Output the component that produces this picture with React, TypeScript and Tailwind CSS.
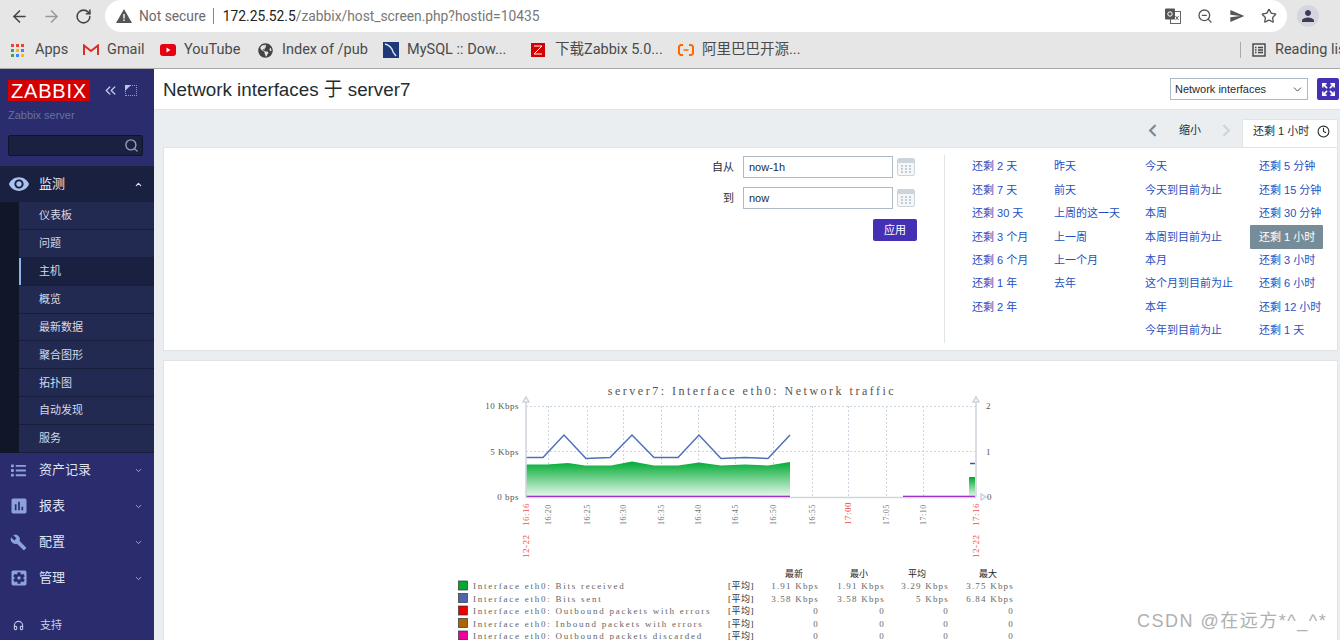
import { ArrowLeft, ArrowRight, RotateCw, ZoomOut, Star, ChevronLeft, ChevronRight, ChevronDown, ChevronUp, ChevronsLeft, Clock, Search, Expand, Headphones } from 'lucide-react'
import { MdVisibility, MdAssessment, MdBuild, MdSettingsApplications, MdPerson, MdSend } from 'react-icons/md'
import { FaList, FaGlobeAmericas } from 'react-icons/fa'

const UI_FONT = "font-['Liberation_Sans','Noto_Sans_CJK_SC',sans-serif]"

function AppsIcon() {
  const colors = ['#ea4335', '#ea4335', '#ea4335', '#34a853', '#fbbc05', '#4285f4', '#34a853', '#4285f4', '#fbbc05']
  return (
    <div className="grid h-[13px] w-[13px] grid-cols-3 gap-[2px]">
      {colors.map((c, i) => (
        <div key={i} className="h-[3px] w-[3px]" style={{ background: c }} />
      ))}
    </div>
  )
}

function GmailIcon() {
  return (
    <svg width="16" height="12" viewBox="0 0 16 12">
      <path d="M1 11V1.500L8 7l7-5.500V11" fill="none" stroke="#d93025" strokeWidth="2" />
    </svg>
  )
}

function YoutubeIcon() {
  return (
    <svg width="16" height="12" viewBox="0 0 16 12">
      <rect width="16" height="12" rx="3" fill="#e60012" />
      <path d="M6.500 3.500v5l4-2.500z" fill="#fff" />
    </svg>
  )
}

function MysqlIcon() {
  return (
    <svg width="16" height="16" viewBox="0 0 16 16">
      <rect width="16" height="16" fill="#1f3a78" />
      <path d="M2 2c4 1 7 4 8 8l3 4" fill="none" stroke="#dfe7f5" strokeWidth="1.300" />
    </svg>
  )
}

function ZabbixMark() {
  return (
    <svg width="14" height="14" viewBox="0 0 14 14">
      <rect width="14" height="14" fill="#d40000" />
      <path d="M3 3h8L3 11h8" fill="none" stroke="#fff" strokeWidth="1" />
    </svg>
  )
}

function AliIcon() {
  return (
    <svg width="16" height="12" viewBox="0 0 16 12">
      <path d="M5 1H2.500L1 2.500v7L2.500 11H5M11 1h2.500L15 2.500v7L13.500 11H11" fill="none" stroke="#ff6a00" strokeWidth="2" />
      <path d="M5.500 6h5" stroke="#ff6a00" strokeWidth="1.500" />
    </svg>
  )
}

function TranslateIcon() {
  return (
    <svg width="16" height="16" viewBox="0 0 16 16">
      <rect x="5.500" y="3.500" width="10" height="12" fill="#fff" stroke="#666" />
      <rect x="0" y="0.500" width="10" height="11" rx="1" fill="#555" />
      <circle cx="5" cy="6" r="2.200" fill="none" stroke="#fff" strokeWidth="1" />
      <path d="M10.500 8l3 4M13.500 8l-3 4" stroke="#666" strokeWidth="1" />
    </svg>
  )
}

function Bookmark({ icon, label, className }: { icon: React.ReactNode; label: string; className: string }) {
  return (
    <div className={`flex shrink-0 items-center ${className}`}>
      <div className="flex w-[24px] shrink-0 items-center">{icon}</div>
      <span className="whitespace-nowrap">{label}</span>
    </div>
  )
}

function BrowserChrome() {
  return (
    <div className="h-[69px] shrink-0 border-b border-[#a9a9a9] bg-[#e6e6e6] font-['Roboto','Noto_Sans_CJK_SC',sans-serif] text-[#4a4a4a]">
      <div className="flex h-[32px] items-center">
        <div className="flex w-[105px] items-center pl-[10px] text-[#444]">
          <ArrowLeft size={19} strokeWidth={2} />
          <ArrowRight size={19} strokeWidth={2} className="ml-[13px] text-[#999]" />
          <RotateCw size={17} strokeWidth={2.200} className="ml-[14px]" />
        </div>
        <div className="flex h-[32px] w-[1182px] items-center rounded-l-full rounded-r-full bg-white pl-[11px] text-[13.800px]">
          <svg width="16" height="14" viewBox="0 0 16 14" className="shrink-0">
            <path d="M8 0l8 14H0z" fill="#555" />
            <path d="M7.300 5h1.400v4.500H7.300zM7.300 10.500h1.400v1.500H7.300z" fill="#fff" />
          </svg>
          <span className="ml-[7px] whitespace-nowrap text-[#6b6b6b]">Not secure</span>
          <div className="ml-[7px] h-[16px] w-px bg-[#888]" />
          <span className="ml-[9px] whitespace-nowrap text-[#222]">172.25.52.5</span>
          <span className="whitespace-nowrap text-[#777]">/zabbix/host_screen.php?hostid=10435</span>
          <div className="ml-auto flex items-center gap-[16px] pr-[10px] text-[#555]">
            <TranslateIcon />
            <ZoomOut size={16} />
            <MdSend size={16} />
            <Star size={16} strokeWidth={2} />
          </div>
        </div>
        <div className="ml-[10px] flex h-[22px] w-[22px] items-center justify-center rounded-full bg-[#d5d5de] text-[#3c3c5a]">
          <MdPerson size={18} />
        </div>
      </div>
      <div className="flex h-[36px] items-center overflow-hidden pl-[11px] text-[14.500px]">
        <Bookmark icon={<AppsIcon />} label="Apps" className="w-[72px]" />
        <Bookmark icon={<GmailIcon />} label="Gmail" className="w-[77px]" />
        <Bookmark icon={<YoutubeIcon />} label="YouTube" className="w-[98px]" />
        <Bookmark icon={<FaGlobeAmericas size={15} className="text-[#444]" />} label="Index of /pub" className="w-[125px]" />
        <Bookmark icon={<MysqlIcon />} label="MySQL :: Dow..." className="w-[148px]" />
        <Bookmark icon={<ZabbixMark />} label="下载Zabbix 5.0..." className="w-[147px]" />
        <Bookmark icon={<AliIcon />} label="阿里巴巴开源..." className="w-[562px]" />
        <div className="h-[16px] w-px shrink-0 bg-[#aaa]" />
        <div className="ml-[11px] flex shrink-0 items-center gap-[9px] whitespace-nowrap">
          <svg width="14" height="14" viewBox="0 0 14 14" fill="none" stroke="#444" strokeWidth="1.400">
            <rect x="1" y="1" width="12" height="12" />
            <path d="M3 4.500h1.500M6 4.500h5M3 7h1.500M6 7h5M3 9.500h1.500M6 9.500h5" />
          </svg>
          <span>Reading list</span>
        </div>
      </div>
    </div>
  )
}

const subItems = ['仪表板', '问题', '主机', '概览', '最新数据', '聚合图形', '拓扑图', '自动发现', '服务']

function MenuRow({ icon, label }: { icon: React.ReactNode; label: string }) {
  return (
    <div className="flex h-[36px] items-center">
      <div className="flex w-[39px] justify-center pr-[2px] text-[#8ba3d8]">{icon}</div>
      <span className="text-[13px] text-[#dfe4f2]">{label}</span>
      <ChevronDown size={9} strokeWidth={2.500} className="ml-auto mr-[11px] text-[#9fb0da]" />
    </div>
  )
}

function Sidebar() {
  return (
    <div className={`h-full w-[154px] shrink-0 overflow-hidden bg-[#2a2c6e] ${UI_FONT}`}>
      <div className="flex items-center pl-[8px] pt-[11px]">
        <div className="flex h-[21px] w-[82px] items-center justify-center bg-[#d40000] text-[20px] leading-none tracking-[0.800px] text-white">
          ZABBIX
        </div>
        <ChevronsLeft size={17} className="ml-[12px] text-[#b9c4e6]" />
        <div className="relative ml-[6px] h-[11px] w-[12px] border border-dotted border-[#8c9ccb]">
          <div className="absolute left-[-1px] top-[-1px] h-0 w-0 border-r-[6px] border-t-[6px] border-r-transparent border-t-[#b9c4e6]" />
        </div>
      </div>
      <div className="mt-[8px] pl-[8px] text-[11px] leading-[13px] text-[#66729f]">Zabbix server</div>
      <div className="ml-[8px] mt-[13px] flex h-[21px] w-[135px] items-center justify-end rounded-[2px] border border-[#0f1428] bg-[#1a2140] pr-[3px] text-[#93a1bf]">
        <Search size={15} strokeWidth={2.200} />
      </div>
      <div className="mt-[10px] flex h-[36px] items-center bg-[#1a2140]">
        <div className="flex w-[39px] justify-center pr-[2px] text-[#aac3ee]">
          <MdVisibility size={22} />
        </div>
        <span className="text-[13px] text-[#e6eaf4]">监测</span>
        <ChevronUp size={9} strokeWidth={3} className="ml-auto mr-[11px] text-[#dfe4f2]" />
      </div>
      <div className="flex bg-[#111728]">
        <div className="w-[19px] shrink-0" />
        <div className="flex-1">
          {subItems.map((item) => (
            <div
              key={item}
              className={`flex h-[27.900px] items-center border-b border-[#171d3a] pl-[20px] text-[11px] text-[#d5dae8] ${
                item === '主机' ? 'bg-[#1a2140] shadow-[inset_2px_0_0_#8ab4f0]' : 'bg-[#222a52]'
              }`}
            >
              {item}
            </div>
          ))}
        </div>
      </div>
      <div className="-mt-[1px]">
        <MenuRow icon={<FaList size={15} />} label="资产记录" />
        <MenuRow icon={<MdAssessment size={20} />} label="报表" />
        <MenuRow icon={<MdBuild size={17} />} label="配置" />
        <MenuRow icon={<MdSettingsApplications size={20} />} label="管理" />
      </div>
      <div className="mt-[11px] flex h-[36px] items-center">
        <div className="flex w-[39px] justify-center pr-[2px] text-[#b9c4e6]">
          <Headphones size={11} strokeWidth={2.500} />
        </div>
        <span className="pl-px text-[11px] text-[#c9d0e6]">支持</span>
      </div>
    </div>
  )
}

const presetColumns = [
  ['还剩 2 天', '还剩 7 天', '还剩 30 天', '还剩 3 个月', '还剩 6 个月', '还剩 1 年', '还剩 2 年'],
  ['昨天', '前天', '上周的这一天', '上一周', '上一个月', '去年'],
  ['今天', '今天到目前为止', '本周', '本周到目前为止', '本月', '这个月到目前为止', '本年', '今年到目前为止'],
  ['还剩 5 分钟', '还剩 15 分钟', '还剩 30 分钟', '还剩 1 小时', '还剩 3 小时', '还剩 6 小时', '还剩 12 小时', '还剩 1 天'],
]
const columnClasses = ['w-[82px] pl-[27px]', 'w-[92px] pl-[27px]', 'w-[104px] pl-[26px]', 'w-[114px] pl-[36px]']

function CalendarIcon() {
  return (
    <svg width="18" height="18" viewBox="0 0 18 18" className="ml-[4px] shrink-0">
      <rect x="0.500" y="0.500" width="17" height="17" rx="1.500" fill="#f4f6f8" stroke="#cdd5dc" />
      <rect x="1" y="1" width="16" height="4" fill="#cdd5dc" />
      <path d="M4 8h2M8 8h2M12 8h2M4 11h2M8 11h2M12 11h2M4 14h2M8 14h2M12 14h2" stroke="#b4bec8" strokeWidth="1.500" />
    </svg>
  )
}

function DateField({ label, value }: { label: string; value: string }) {
  return (
    <div className="flex items-center">
      <span className="mr-[9px] text-[11px] text-[#1f2c33]">{label}</span>
      <div className="flex h-[22px] w-[150px] items-center border border-[#acbbc6] bg-white pl-[5px] text-[11px] text-[#1f2c33]">{value}</div>
      <CalendarIcon />
    </div>
  )
}

function FilterPanel() {
  return (
    <div className="mr-[2px] flex h-[204px] border border-[#dfe4e7] bg-white">
      <div className="flex flex-1 flex-col items-end pr-[29px] pt-[8px]">
        <div className="flex flex-col items-end gap-[9px]">
          <DateField label="自从" value="now-1h" />
          <DateField label="到" value="now" />
        </div>
        <div className="-mr-[2px] mt-[10px] flex h-[22px] w-[44px] items-center justify-center rounded-[2px] bg-[#4330b5] text-[11px] text-white">应用</div>
      </div>
      <div className="my-[7px] w-px bg-[#dfe4e7]" />
      <div className="flex w-[392px] pt-[7px] text-[11px] text-[#1f4fc1]">
        {presetColumns.map((col, i) => (
          <div key={i} className={columnClasses[i] + ' shrink-0 whitespace-nowrap'}>
            {col.map((p) => (
              <div
                key={p}
                className={`flex h-[23.400px] items-center ${i === 3 ? 'ml-[-9px] w-[73px] pl-[9px]' : ''} ${
                  p === '还剩 1 小时' ? 'rounded-[1px] bg-[#768d99] text-white' : ''
                }`}
              >
                {p}
              </div>
            ))}
          </div>
        ))}
      </div>
    </div>
  )
}

const blue = '526,457.500 543,457.500 564,435 586,458.500 610,457.500 632,435 654,457.500 678,457.500 699,435 721,458.500 745,457.500 768,458.500 790,435'
const green = '526,497 526,464.500 547,464.500 568,463 585,465.500 611,465.500 632,461.500 654,465.500 678,465.500 699,462.500 721,465.500 745,464.500 768,465.500 790,462 790,497'
const gridX = [548, 587, 623, 661, 698, 735, 773, 812, 848, 886, 923]
const ticks: [number, string, boolean][] = [
  [548, '16:20', false], [587, '16:25', false], [623, '16:30', false], [661, '16:35', false], [698, '16:40', false], [735, '16:45', false],
  [773, '16:50', false], [812, '16:55', false], [848, '17:00', true], [886, '17:05', false], [923, '17:10', false],
]
const legend: [string, string, string[]][] = [
  ['#00aa33', 'Interface eth0: Bits received', ['1.91 Kbps', '1.91 Kbps', '3.29 Kbps', '3.75 Kbps']],
  ['#4a66ae', 'Interface eth0: Bits sent', ['3.58 Kbps', '3.58 Kbps', '5 Kbps', '6.84 Kbps']],
  ['#ee0000', 'Interface eth0: Outbound packets with errors', ['0', '0', '0', '0']],
  ['#aa6600', 'Interface eth0: Inbound packets with errors', ['0', '0', '0', '0']],
  ['#ee0099', 'Interface eth0: Outbound packets discarded', ['0', '0', '0', '0']],
]
const statX = [819, 885, 949, 1014]
const statHead: [number, string][] = [[794, '最新'], [859, '最小'], [917, '平均'], [988, '最大']]

function TrafficGraph() {
  return (
    <svg viewBox="451 372 600 268" width="600" height="268" className="block font-['Liberation_Serif','Noto_Sans_CJK_SC',serif]">
      <defs>
        <linearGradient id="greenFill" x1="0" y1="0" x2="0" y2="1">
          <stop offset="0" stopColor="#00aa33" />
          <stop offset="1" stopColor="#ecfaef" />
        </linearGradient>
      </defs>
      <text x="752" y="395" textAnchor="middle" fontSize="12" letterSpacing="2.500" fill="#555">server7: Interface eth0: Network traffic</text>
      <g stroke="#ccd6e0" strokeDasharray="2 2" strokeWidth="1">
        <path d="M526 406.500H976M526 451.500H976" />
        {gridX.map((x) => (
          <path key={x} d={`M${x}.500 406V497`} />
        ))}
      </g>
      <polygon points={green} fill="url(#greenFill)" />
      <polyline points={blue} fill="none" stroke="#4f6fb8" strokeWidth="1.500" />
      <rect x="969" y="477" width="6" height="20" fill="url(#greenFill)" />
      <path d="M970 463.500H975" stroke="#3a5aa8" strokeWidth="1.500" />
      <path d="M526 496.500H790M903 496.500H975" stroke="#8a00c8" strokeWidth="1.500" />
      <g stroke="#cdd5dc" strokeWidth="1.500" fill="none">
        <path d="M526 402V497.500H976M976 402V497" />
        <path d="M523 402l3-5 3 5zM973 402l3-5 3 5zM981 494l5 3-5 3z" fill="#fff" />
      </g>
      <g fontSize="9" fill="#555" letterSpacing="0.500">
        <text x="519" y="409" textAnchor="end">10 Kbps</text>
        <text x="519" y="455" textAnchor="end">5 Kbps</text>
        <text x="519" y="500" textAnchor="end">0 bps</text>
        <text x="986" y="409">2</text>
        <text x="986" y="455">1</text>
        <text x="987" y="500">0</text>
      </g>
      <g fontSize="8" letterSpacing="0.500">
        {ticks.map(([x, t, red]) => (
          <text key={t} transform={`translate(${x + 3} 525) rotate(-90)`} fill={red ? '#f05050' : '#777'} fontSize={red ? 9 : 8}>{t}</text>
        ))}
        {[529, 979].map((x, i) => (
          <g key={x} fill="#f05050" fontSize="9">
            <text transform={`translate(${x} 526) rotate(-90)`}>{i ? '17:16' : '16:16'}</text>
            <text transform={`translate(${x} 558) rotate(-90)`}>12-22</text>
          </g>
        ))}
      </g>
      <g fontSize="9" fill="#222">
        {statHead.map(([x, t]) => (
          <text key={t} x={x} y="577" textAnchor="middle">{t}</text>
        ))}
      </g>
      {legend.map(([color, label, stats], i) => {
        const y = 589 + i * 12.500
        return (
          <g key={label} fontSize="9" fill="#666" letterSpacing="1.750">
            <rect x="458.500" y={y - 8} width="9" height="9" fill={color} stroke="#333" strokeWidth="0.700" />
            <text x="473" y={y}>{label}</text>
            <text x="728" y={y} fill="#333" letterSpacing="0.500">[平均]</text>
            {stats.map((s, j) => (
              <text key={j} x={statX[j]} y={y} textAnchor="end" letterSpacing="1.200">{s}</text>
            ))}
          </g>
        )
      })}
    </svg>
  )
}

export default function App() {
  return (
    <div className="relative flex h-[640px] w-[1340px] flex-col overflow-hidden bg-white">
      <BrowserChrome />
      <div className="flex min-h-0 flex-1">
        <Sidebar />
        <div className={`flex min-w-0 flex-1 flex-col bg-[#ebeef0] ${UI_FONT}`}>
          <div className="flex h-[41px] shrink-0 items-center justify-between border-b border-[#dfe4e7] bg-white pl-[9px] pr-[1px]">
            <h1 className="mt-[2px] text-[18.800px] font-normal text-[#1f2c33]">Network interfaces 于 server7</h1>
            <div className="flex items-center gap-[9px]">
              <div className="flex h-[22px] w-[138px] items-center justify-between border border-[#acbbc6] bg-white pl-[4px] pr-[3px] text-[11px] text-[#1f2c33]">
                Network interfaces
                <ChevronDown size={13} strokeWidth={1.500} />
              </div>
              <div className="flex h-[22px] w-[22px] items-center justify-center rounded-[2px] bg-[#4330b5] text-white">
                <Expand size={15} strokeWidth={2.500} />
              </div>
            </div>
          </div>
          <div className="flex h-[37px] shrink-0 items-end justify-end pr-[2px]">
            <div className="flex h-[28px] items-center pb-[5px] text-[11px] text-[#1f2c33]">
              <ChevronLeft size={19} strokeWidth={3} className="mr-[17px] text-[#768d99]" />
              <span>缩小</span>
              <ChevronRight size={19} strokeWidth={3} className="ml-[16px] mr-[6px] text-[#cdd5dc]" />
              <div className="-mb-[5px] flex h-[28px] w-[96px] items-center justify-between border-x border-t border-[#dfe4e7] bg-white pb-[5px] pl-[10px] pr-[7px]">
                还剩 1 小时
                <Clock size={13} strokeWidth={2} />
              </div>
            </div>
          </div>
          <div className="flex-1 pl-[9px]">
            <FilterPanel />
            <div className="mr-[2px] mt-[9px] h-[300px] border border-[#dfe4e7] bg-white pt-[11px]">
              <div className="flex justify-center">
                <TrafficGraph />
              </div>
            </div>
          </div>
        </div>
      </div>
      <div className="absolute left-[1137px] top-[608px] font-['Liberation_Sans','Noto_Sans_CJK_SC',sans-serif] text-[18px] leading-[26px] tracking-[1.500px] text-[#b0b0b0]">
        CSDN @在远方*^_^*
      </div>
    </div>
  )
}
